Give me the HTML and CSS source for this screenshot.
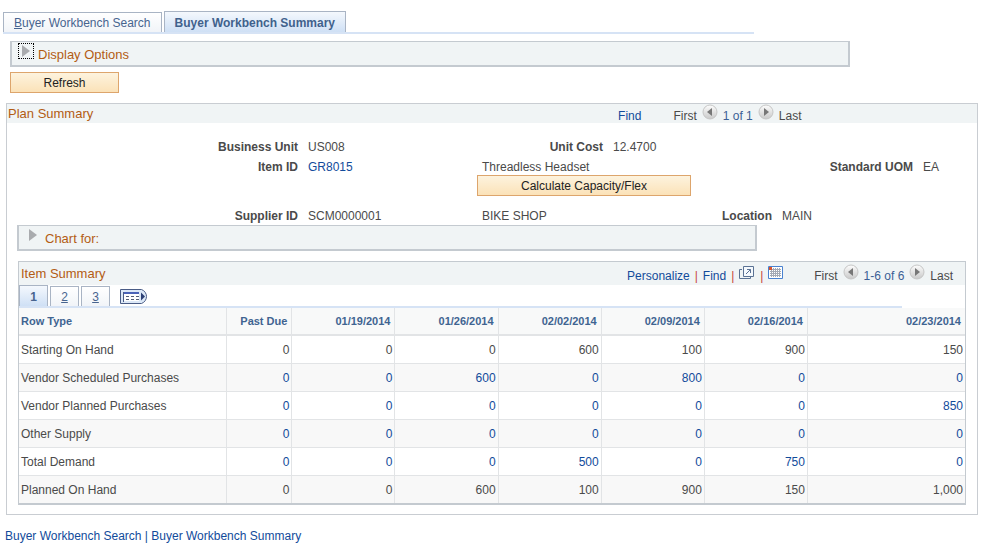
FILE: index.html
```
<!DOCTYPE html>
<html lang="en">
<head>
    <meta charset="UTF-8">
    <meta name="viewport" content="width=device-width, initial-scale=1.0">
    <title>Buyer Workbench Summary</title>
    <link rel="stylesheet" href="styles.css">
</head>
<body>
    <!-- shared icons -->
    <svg class="defs" width="0" height="0" aria-hidden="true">
        <defs>
            <linearGradient id="ball" x1="0" y1="0" x2="0" y2="1">
                <stop offset="0" stop-color="#fdfdfd"/>
                <stop offset="1" stop-color="#c9c9c9"/>
            </linearGradient>
        </defs>
        <symbol id="prev" viewBox="0 0 16 16">
            <circle cx="8" cy="8" r="7" fill="url(#ball)" stroke="#c6c6c6"/>
            <path d="M10 4v8L5 8z" fill="#777"/>
        </symbol>
        <symbol id="next" viewBox="0 0 16 16">
            <circle cx="8" cy="8" r="7" fill="url(#ball)" stroke="#c6c6c6"/>
            <path d="M6 4v8l5-4z" fill="#777"/>
        </symbol>
        <symbol id="arrow" viewBox="0 0 14 14">
            <path d="M3 1v12l8-6z" fill="#a9abae"/>
        </symbol>
    </svg>

    <nav class="page-tabs">
        <a class="page-tab" href="#search"><u>B</u>uyer Workbench Search</a>
        <a class="page-tab active" href="#summary">Buyer Workbench Summary</a>
    </nav>

    <main>
        <div class="fold display-options">
            <button class="toggle focused" type="button" aria-labelledby="display-title"><svg width="14" height="14"><use href="#arrow"/></svg></button>
            <h2 class="title" id="display-title">Display Options</h2>
        </div>
        <button class="btn refresh" type="button">Refresh</button>

        <section class="plan">
            <div class="plan-head">
                <h2 class="title">Plan Summary</h2>
                <a href="#find">Find</a>
                <div class="pager">
                    <span>First</span>
                    <button class="ball" type="button" aria-label="Previous"><svg width="16" height="16"><use href="#prev"/></svg></button>
                    <span class="count">1 of 1</span>
                    <button class="ball" type="button" aria-label="Next"><svg width="16" height="16"><use href="#next"/></svg></button>
                    <span>Last</span>
                </div>
            </div>

            <div class="fields">
                <span class="label">Business Unit</span>
                <span>US008</span>
                <span class="label">Unit Cost</span>
                <span>12.4700</span>

                <span class="label row-2">Item ID</span>
                <span class="row-2"><a href="#item">GR8015</a></span>
                <span class="row-2 wide">Threadless Headset</span>
                <span class="label row-2">Standard UOM</span>
                <span class="row-2">EA</span>

                <button class="btn calculate" type="button">Calculate Capacity/Flex</button>

                <span class="label row-4">Supplier ID</span>
                <span class="row-4">SCM0000001</span>
                <span class="row-4">BIKE SHOP</span>
                <span class="label row-4">Location</span>
                <span class="row-4">MAIN</span>
            </div>

            <div class="fold chart">
                <button class="toggle" type="button" aria-labelledby="chart-title"><svg width="14" height="14"><use href="#arrow"/></svg></button>
                <h2 class="title" id="chart-title">Chart for:</h2>
            </div>

            <section class="items">
                <div class="items-head">
                    <h2 class="title">Item Summary</h2>
                    <div class="tools">
                        <a href="#personalize">Personalize</a>
                        <span class="bar">|</span>
                        <a href="#find-item">Find</a>
                        <span class="bar">|</span>
                        <a class="tool" href="#popup" aria-label="View in new window">
                            <svg width="16" height="14" viewBox="0 0 16 14" fill="none" stroke="#5b7294">
                                <path d="M3 3.500H.5v9h11V11"/>
                                <path d="M4.500 .5h10v10h-10z" fill="#f5f9fd"/>
                                <path d="M7 8l4.500-4.500M8 3.500h3.500V7"/>
                            </svg>
                        </a>
                        <span class="bar">|</span>
                        <a class="tool" href="#download" aria-label="Download to spreadsheet">
                            <svg width="15" height="13" viewBox="0 0 15 13">
                                <path d="M.5 .5h14v12H.5z" fill="#fff" stroke="#4a82d0"/>
                                <path d="M2 3.500h11M2 5.500h11M2 7.500h11M2 9.500h11M3.500 2v9M5.500 2v9M7.500 2v9M9.500 2v9M11.500 2v9" stroke="#a3a9b5"/>
                                <path d="M1 1h3v3H1z" fill="#d9532c"/>
                            </svg>
                        </a>
                    </div>
                    <div class="pager">
                        <span>First</span>
                        <button class="ball" type="button" aria-label="Previous rows"><svg width="16" height="16"><use href="#prev"/></svg></button>
                        <span class="count">1-6 of 6</span>
                        <button class="ball" type="button" aria-label="Next rows"><svg width="16" height="16"><use href="#next"/></svg></button>
                        <span>Last</span>
                    </div>
                </div>

                <nav class="grid-tabs">
                    <a class="grid-tab active" href="#t1">1</a>
                    <a class="grid-tab" href="#t2">2</a>
                    <a class="grid-tab" href="#t3">3</a>
                    <a class="show-all" href="#all" aria-label="Show all columns">
                        <svg width="28" height="15" viewBox="0 0 28 15">
                            <path d="M.5 .5h21c3 1 5 4 5 7s-2 6-5 7H.5z" fill="#dce8f7" stroke="#4a5c86"/>
                            <path d="M3 3h16v9H3z" fill="#fff"/>
                            <path d="M3 4h16" stroke="#4a63b8" stroke-width="2"/>
                            <path d="M3.500 3v10" stroke="#4a5c86"/>
                            <path d="M6 7.500h13M6 10.500h13" stroke="#555f77" stroke-dasharray="3 2"/>
                            <path d="M21 3.500v8l4-4z" fill="#2b3f74"/>
                        </svg>
                    </a>
                </nav>

                <table>
                    <colgroup>
                        <col class="col-type">
                        <col class="col-due">
                        <col class="col-date" span="5">
                        <col>
                    </colgroup>
                    <thead>
                        <tr><th>Row Type</th><th>Past Due</th><th>01/19/2014</th><th>01/26/2014</th><th>02/02/2014</th><th>02/09/2014</th><th>02/16/2014</th><th>02/23/2014</th></tr>
                    </thead>
                    <tbody>
                        <tr><td>Starting On Hand</td><td>0</td><td>0</td><td>0</td><td>600</td><td>100</td><td>900</td><td>150</td></tr>
                        <tr><td>Vendor Scheduled Purchases</td><td><a href="#q">0</a></td><td><a href="#q">0</a></td><td><a href="#q">600</a></td><td><a href="#q">0</a></td><td><a href="#q">800</a></td><td><a href="#q">0</a></td><td><a href="#q">0</a></td></tr>
                        <tr><td>Vendor Planned Purchases</td><td><a href="#q">0</a></td><td><a href="#q">0</a></td><td><a href="#q">0</a></td><td><a href="#q">0</a></td><td><a href="#q">0</a></td><td><a href="#q">0</a></td><td><a href="#q">850</a></td></tr>
                        <tr><td>Other Supply</td><td><a href="#q">0</a></td><td><a href="#q">0</a></td><td><a href="#q">0</a></td><td><a href="#q">0</a></td><td><a href="#q">0</a></td><td><a href="#q">0</a></td><td><a href="#q">0</a></td></tr>
                        <tr><td>Total Demand</td><td><a href="#q">0</a></td><td><a href="#q">0</a></td><td><a href="#q">0</a></td><td><a href="#q">500</a></td><td><a href="#q">0</a></td><td><a href="#q">750</a></td><td><a href="#q">0</a></td></tr>
                        <tr><td>Planned On Hand</td><td>0</td><td>0</td><td>600</td><td>100</td><td>900</td><td>150</td><td>1,000</td></tr>
                    </tbody>
                </table>
            </section>
        </section>
    </main>

    <footer>
        <a href="#search">Buyer Workbench Search</a> | <a href="#summary">Buyer Workbench Summary</a>
    </footer>
</body>
</html>
```
FILE: styles.css
```
* {
    box-sizing: border-box;
}
body {
    margin: 0;
    padding-top: 11px;
    background: #fff;
    color: #4a4a4a;
    font: 12px/16px "Liberation Sans", Arial, sans-serif;
}
a {
    color: #124b9b;
    text-decoration: none;
}
button {
    font: inherit;
    cursor: pointer;
}
svg {
    display: block;
}
.defs {
    position: absolute;
}
.title {
    margin: 0;
    color: #b35c14;
    font-size: 13px;
    font-weight: normal;
    line-height: 18px;
}

/* page tabs */
.page-tabs {
    display: flex;
    align-items: flex-end;
    gap: 2px;
    width: 75.7%;
    margin-left: 3px;
    border-bottom: 2px solid #d6e3f5;
}
.page-tab {
    padding: 2px 10px 1px;
    border: 1px solid #a9b4c4;
    border-bottom: 0;
    background: linear-gradient(#fff, #f1f4f8);
    color: #47648f;
}
.page-tab.active {
    padding: 3px 10px 1px;
    background: linear-gradient(#f4f8fd, #cfe0f5);
    color: #40618c;
    font-weight: bold;
}

/* collapsed group boxes */
.fold {
    display: flex;
    gap: 4px;
    height: 26px;
    padding: 1px 6px;
    border: solid #c4cad0;
    border-width: 1px 2px 2px;
    background: #f0f4f5;
}
.fold .title {
    padding-top: 3px;
}
.toggle {
    width: 16px;
    height: 16px;
    padding: 0;
    border: 1px solid transparent;
    background: none;
}
.toggle.focused {
    border: 1px dotted #000;
}
.display-options {
    width: 84.7%;
    margin: 7px 0 5px 10px;
}

.btn {
    height: 21px;
    padding: 0;
    border: 1px solid #dda56c;
    background: linear-gradient(#fdf3de, #fbe2b8);
    color: #222;
}
.refresh {
    display: block;
    width: 109px;
    margin-left: 10px;
}

/* plan summary */
.plan {
    margin: 10px 14px 0 6px;
    padding-bottom: 9px;
    border: 1px solid #c9cdd2;
}
.plan-head {
    display: flex;
    align-items: center;
    height: 19px;
    background: #f0f4f5;
}
.plan-head .title {
    width: 63%;
    padding-left: 1px;
}
.plan-head a {
    margin-right: 32px;
    padding-top: 4px;
}
.pager {
    display: flex;
    gap: 5px;
    padding-top: 4px;
}
.ball {
    width: 16px;
    height: 16px;
    margin-top: -4px;
    padding: 0;
    border: 0;
    background: none;
}
.count {
    color: #3c5f96;
}
.fields {
    display: grid;
    grid-template-columns: 296fr 174fr 131fr 169fr 141fr 59fr;
    grid-template-rows: 20px 18px 21px 29px;
    align-items: center;
    padding-top: 14px;
}
.fields span {
    padding: 0 5px;
}
.fields .label {
    font-weight: bold;
    text-align: right;
}
.fields .row-2 {
    grid-row: 2;
    padding-top: 2px;
}
.wide {
    grid-column: 3 / 5;
}
.calculate {
    grid-row: 3;
    grid-column: 3 / 5;
    width: 214px;
}
.fields .row-4 {
    grid-row: 4;
    padding-top: 11px;
}
.chart {
    width: 76.3%;
    margin: 0 0 10px 10px;
}

/* item grid */
.items {
    margin: 0 11px;
    border: 1px solid #c4cad0;
    border-width: 1px 1px 2px;
}
.items-head {
    display: flex;
    align-items: center;
    height: 23px;
    padding-right: 12px;
    background: #f0f4f5;
}
.items-head .title {
    width: 65.1%;
    padding-left: 2px;
}
.tools {
    display: flex;
    gap: 5px;
    padding-top: 4px;
}
.tool {
    margin-top: -2px;
}
.bar {
    color: #c8463c;
}
.items-head .pager {
    margin-left: auto;
}
.grid-tabs {
    display: flex;
    align-items: flex-end;
    gap: 2px;
    width: 93.3%;
    height: 23px;
    border-bottom: 2px solid #d6e3f5;
}
.grid-tab {
    width: 29px;
    padding: 2px 0 1px;
    border: 1px solid #a9b4c4;
    border-bottom: 0;
    background: linear-gradient(#fff, #f1f4f8);
    color: #47648f;
    text-align: center;
    text-decoration: underline;
}
.grid-tab.active {
    padding: 3px 0 1px;
    background: linear-gradient(#f4f8fd, #cfe0f5);
    font-weight: bold;
    text-decoration: none;
}
.show-all {
    margin: 0 0 2px 8px;
}

table {
    width: 100%;
    border-collapse: separate;
    border-spacing: 0;
    table-layout: fixed;
}
.col-type {
    width: 22%;
}
.col-due {
    width: 6.9%;
}
.col-date {
    width: 10.9%;
}
th,
td {
    height: 28px;
    padding: 0 2px;
    border-right: 1px solid #e2e4e6;
    border-bottom: 1px solid #e2e4e6;
    text-align: right;
}
th {
    padding-right: 4px;
    border-bottom-width: 2px;
    background: #f8f9f9;
    color: #3f6491;
    font-size: 11px;
}
th:first-child,
td:first-child {
    text-align: left;
}
th:last-child,
td:last-child {
    border-right: 0;
}
tbody tr:nth-child(even) {
    background: #f8f8f8;
}
tbody tr:last-child td {
    height: 27px;
    border-bottom: 0;
}

footer {
    padding: 13px 5px;
    color: #124b9b;
}
```
